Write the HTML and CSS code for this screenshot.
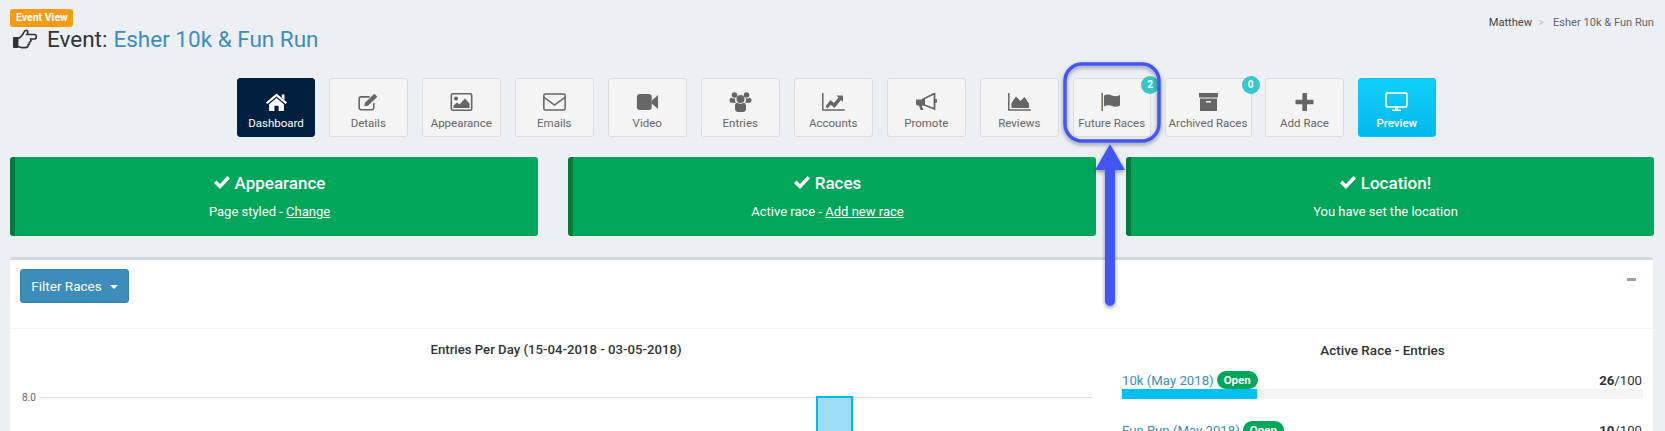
FILE: index.html
```html
<!DOCTYPE html>
<html lang="en">
<head>
<meta charset="utf-8">
<title>Event: Esher 10k &amp; Fun Run</title>
<link rel="stylesheet" href="styles.css">
</head>
<body>
<div class="page">
  <header class="head">
    <div class="head-left">
      <span class="view-badge">Event View</span>
      <h1 class="title">
        <svg class="hand" viewBox="0 0 24 20"><path d="M.5 8.500h4.500V18.500H.5z" fill="#333" stroke="#333"/><path d="M5 9.500c2.500-1 5-4 6-6.500.6-1.800 3.500-2.200 3.800-.2.200 1-.3 1.800-.8 2.700h7.300c2.800 0 2.800 4.500 0 4.500h-3.600c.5 1.400-.1 2.800-1.200 3.200.2 1.300-.4 2.400-1.400 2.700.1 1.700-1 2.800-2.600 2.800H9c-1.700 0-2.600-1-4-1.200" fill="none" stroke="#333" stroke-width="1.700"/></svg>
        <span>Event:</span> <a class="title-link">Esher 10k &amp; Fun Run</a>
      </h1>
    </div>
    <nav class="crumbs"><span class="crumb-first">Matthew</span><span class="crumb-sep">&gt;</span><span>Esher 10k &amp; Fun Run</span></nav>
  </header>

  <nav class="tools">
    <a class="tool tool-dark">
      <svg class="ico" viewBox="0 0 20 17"><path d="M10 .5 20 9l-1.400 1.500L10 3.200 1.400 10.500 0 9zM15 1.500h2.500v5L15 4.300z"/><path d="M10 4.800l7 5.800V17h-5v-5H8v5H3v-6.400z"/></svg>
      Dashboard</a>
    <a class="tool">
      <svg class="ico" viewBox="0 0 20 17"><path d="M15 9.500V14a1.800 1.800 0 0 1-1.800 1.800H3A1.800 1.800 0 0 1 1.200 14V5.500A1.800 1.800 0 0 1 3 3.700h8" fill="none" stroke="#666" stroke-width="1.500"/><path d="M6 12.500l.6-3.200L15.500.6l2.900 2.900-8.900 8.600z"/></svg>
      Details</a>
    <a class="tool">
      <svg class="ico" viewBox="0 0 22 18"><rect x=".8" y=".8" width="20.400" height="16.400" rx="1.500" fill="none" stroke="#666" stroke-width="1.600"/><circle cx="5.500" cy="5.500" r="2"/><path d="M3 15v-2.500l3.500-3 2.500 2 5.500-6 4.500 5V15z"/></svg>
      Appearance</a>
    <a class="tool">
      <svg class="ico" viewBox="0 0 22 17"><rect x=".8" y=".8" width="20.400" height="15.400" rx="1.500" fill="none" stroke="#666" stroke-width="1.500"/><path d="M1 4l10 7.500L21 4" fill="none" stroke="#666" stroke-width="1.500"/></svg>
      Emails</a>
    <a class="tool">
      <svg class="ico" viewBox="0 0 20 17"><rect y="1" width="14" height="15" rx="3"/><path d="M14 7l6-5v13l-6-5z"/></svg>
      Video</a>
    <a class="tool">
      <svg class="ico ico-tall" viewBox="0 0 22 20"><circle cx="11" cy="7" r="4"/><circle cx="5" cy="3" r="2.800"/><circle cx="17" cy="3" r="2.800"/><path d="M0 8.500c0-1.800 1-2.800 2-2.800 1 .8 2.500 1 3.800.7-.6 1.600-.2 3 .7 4.300H2c-1.200 0-2-.7-2-2.200zM22 8.500c0-1.800-1-2.800-2-2.800-1 .8-2.500 1-3.800.7.600 1.600.2 3-.7 4.300H20c1.200 0 2-.7 2-2.200z"/><path d="M5.500 13.500c0-1.800 1-2.800 2.200-2.800 2 1.400 4.600 1.400 6.600 0 1.200 0 2.200 1 2.200 2.800V17c0 1.500-1 3-3 3H8.500c-2 0-3-1.500-3-3z"/></svg>
      Entries</a>
    <a class="tool">
      <svg class="ico" viewBox="0 0 23 18"><path d="M.8 0v17h22" fill="none" stroke="#666" stroke-width="1.500"/><path d="M3.500 13.500 8.500 7l3.500 3 4.500-5.500-2-2h6.500V9l-2-2-6.500 8-3.700-3.200-3.300 3.700z"/></svg>
      Accounts</a>
    <a class="tool">
      <svg class="ico" viewBox="0 0 21 18"><path d="M0 6.500h6v7l1.500 3.500H4.500L3 12.500H1.500C.5 12.500 0 11.500 0 10.500z"/><path d="M7 6.300 18.500.5v15.500L7 11.500z" fill="none" stroke="#666" stroke-width="1.800"/><path d="M6 6h3v6.500H6z"/><rect x="18.500" y="6" width="2.500" height="4" rx="1"/></svg>
      Promote</a>
    <a class="tool">
      <svg class="ico" viewBox="0 0 23 18"><path d="M.8 0v17h22" fill="none" stroke="#666" stroke-width="1.500"/><path d="M3.500 15V10l4.500-6.500L12.500 8l4-4 4.500 6.500V15z"/></svg>
      Reviews</a>
    <a class="tool tool-future">
      <svg class="ico" viewBox="0 0 21 18"><rect x=".5" y="0" width="1.300" height="18" fill="#5a5040"/><path d="M3 2.500c3-1.500 5.500-1 8 0s5 1 8-.5v10.500c-3 1.500-5.500 1.500-8 .5s-5-1-8 .5z"/></svg>
      Future Races<span class="count">2</span></a>
    <a class="tool tool-archived">
      <svg class="ico" viewBox="0 0 19 18"><rect width="19" height="4.500"/><path d="M1 5.500h17V18H1zM7 8v1.500h5V8z" fill-rule="evenodd"/></svg>
      Archived Races<span class="count">0</span></a>
    <a class="tool tool-add">
      <svg class="ico" viewBox="0 0 17 17"><rect x="6.500" width="4.400" height="17" rx=".8"/><rect y="6.300" width="17" height="4.400" rx=".8"/></svg>
      Add Race</a>
    <a class="tool tool-preview">
      <svg class="ico ico-screen" viewBox="0 0 23 20"><rect x="1" y="1" width="21" height="14" rx="1.500" fill="none" stroke="#fff" stroke-width="1.700"/><path d="M10 15h3v2.500h3V19H7v-1.500h3z" fill="#fff"/></svg>
      Preview</a>
  </nav>

  <section class="cards">
    <div class="card">
      <h3 class="card-title"><svg class="tick" viewBox="0 0 16 13"><path d="M0 7l2.500-2.500L6 8l7.500-8L16 2.500 6 13z"/></svg>Appearance</h3>
      <p class="card-text">Page styled - <a class="card-link">Change</a></p>
    </div>
    <div class="card">
      <h3 class="card-title"><svg class="tick" viewBox="0 0 16 13"><path d="M0 7l2.500-2.500L6 8l7.500-8L16 2.500 6 13z"/></svg>Races</h3>
      <p class="card-text">Active race - <a class="card-link">Add new race</a></p>
    </div>
    <div class="card">
      <h3 class="card-title"><svg class="tick" viewBox="0 0 16 13"><path d="M0 7l2.500-2.500L6 8l7.500-8L16 2.500 6 13z"/></svg>Location!</h3>
      <p class="card-text">You have set the location</p>
    </div>
  </section>

  <section class="panel">
    <div class="panel-head">
      <button class="filter">Filter Races<span class="caret"></span></button>
      <span class="collapse"></span>
    </div>
    <div class="panel-body">
      <div class="chart">
        <h4 class="sub sub-chart">Entries Per Day (15-04-2018 - 03-05-2018)</h4>
        <div class="plot">
          <div class="gridrow"><span class="tick-label">8.0</span><span class="gridline"></span></div>
          <div class="bar"></div>
        </div>
      </div>
      <div class="races">
        <h4 class="sub">Active Race - Entries</h4>
        <div class="race">
          <div class="race-line"><a class="race-name">10k (May 2018)</a><span class="pill">Open</span><span class="race-num"><b>26</b>/100</span></div>
          <div class="track"><div class="fill" style="width:26%"></div></div>
        </div>
        <div class="race">
          <div class="race-line"><a class="race-name">Fun Run (May 2018)</a><span class="pill">Open</span><span class="race-num"><b>10</b>/100</span></div>
          <div class="track"><div class="fill" style="width:10%"></div></div>
        </div>
      </div>
    </div>
  </section>

  <svg class="callout" viewBox="0 0 1665 431" width="1665" height="431">
    <defs><filter id="sh" x="-20%" y="-20%" width="140%" height="140%"><feDropShadow dx="0" dy="2" stdDeviation="2" flood-color="#000" flood-opacity=".4"/></filter></defs>
    <g filter="url(#sh)">
      <rect x="1065" y="64" width="94" height="77" rx="17" fill="none" stroke="#4057f5" stroke-width="3.500"/>
      <path d="M1110 144l15 26h-10v131a5 5 0 0 1-10 0V170h-10z" fill="#4057f5"/>
    </g>
  </svg>
</div>
</body>
</html>
```
FILE: styles.css
```css
* { box-sizing: border-box; }
html, body { margin: 0; height: 431px; overflow: hidden; }
body { background: #ecf0f5; font-family: Roboto, "Noto Sans", sans-serif; color: #333; }
.page { position: relative; width: 1665px; height: 431px; padding: 9px 11px 0 10px; overflow: hidden; }

.head { display: flex; justify-content: space-between; align-items: flex-start; height: 69px; }
.head-left { display: flex; flex-direction: column; align-items: flex-start; }
.view-badge { background: #f39c12; color: #fff; font-size: 10.500px; font-weight: 700; line-height: 18px; height: 18px; padding: 0 6px; border-radius: 3px; width: 63px; white-space: nowrap; }
.title { margin: 0 0 0 3px; font-size: 22.500px; font-weight: 400; line-height: 24px; display: flex; align-items: center; gap: 6px; white-space: nowrap; color: #333; }
.hand { width: 24px; height: 20px; margin-right: 4px; }
.title-link { color: #3c8dbc; }
.crumbs { font-size: 11.100px; margin-top: 7px; color: #666; line-height: 14px; }
.crumb-first { color: #444; }
.crumb-sep { color: #bbb; margin: 0 9px 0 6px; }

.tools { display: flex; gap: 13.500px; padding-left: 227px; height: 59px; align-items: stretch; }
.tool { position: relative; display: flex; flex-direction: column; align-items: center; justify-content: flex-end; width: 79.500px; padding-bottom: 5px; background: #f4f4f4; border: 1px solid #ddd; border-radius: 3px; color: #666; font-size: 11.500px; line-height: 16px; white-space: nowrap; }
.ico { height: 18px; width: 23px; fill: #666; margin-bottom: 4px; }
.ico-tall { height: 20px; margin-bottom: 3px; }
.tool-dark { width: 78px; background: #001f3f; border-color: #001f3f; color: #fff; }
.tool-dark .ico { fill: #fff; }
.tool-future { width: 78.500px; }
.tool-archived { width: 87px; }
.tool-add { width: 79px; }
.tool-preview { width: 78.500px; background: linear-gradient(#12d0fc, #00b8ec); border-color: #08c2f2; color: #fff; font-weight: 500; }
.ico-screen { height: 20px; margin-bottom: 3px; }
.count { position: absolute; top: -3px; right: -9px; width: 18px; height: 18px; border-radius: 50%; background: #35c8c8; color: #fff; font-size: 10px; font-weight: 700; line-height: 18px; text-align: center; }

.cards { display: flex; gap: 30px; margin-top: 20px; }
.card { flex: 1; height: 79px; background: #00a65a; border-left: 5px solid #007a3d; border-radius: 3px; color: #fff; text-align: center; padding: 15px 14px 0 0; }
.card-title { margin: 0; font-size: 17px; font-weight: 500; line-height: 22px; }
.tick { width: 16px; height: 13px; fill: #fff; margin-right: 5px; }
.card-text { margin: 9px 0 0; font-size: 13px; line-height: 18px; }
.card-link { text-decoration: underline; color: #fff; }

.panel { margin-top: 21px; background: #fff; border-top: 3px solid #d2d6de; border-radius: 3px 3px 0 0; height: 200px; margin-right: 1px; }
.panel-head { display: flex; justify-content: space-between; height: 69px; padding: 9px 17px 0 10px; border-bottom: 1px solid #f4f4f4; }
.filter { height: 34px; width: 109px; background: #3c8dbc; border: 1px solid #367fa9; border-radius: 3px; color: #fff; font: 13.500px Roboto, sans-serif; padding: 0; }
.caret { display: inline-block; border: 4px solid transparent; border-top-color: #fff; border-bottom: 0; margin-left: 8px; vertical-align: middle; }
.collapse { width: 9px; height: 3px; background: #97a0b3; margin-top: 9px; }
.panel-body { display: grid; grid-template-columns: 1072px 521px; column-gap: 30px; padding: 12px 10px 0; }
.sub { margin: 0; font-size: 13.500px; font-weight: 500; line-height: 18px; text-align: center; color: #333; }
.sub-chart { font-size: 13.200px; }
.plot { position: relative; margin-top: 33px; height: 60px; }
.gridrow { display: flex; align-items: center; gap: 3px; height: 10px; }
.tick-label { font-size: 10px; color: #666; width: 16px; padding-left: 2px; }
.gridline { flex: 1; height: 1px; background: #ddd; }
.bar { position: absolute; left: 796px; top: 4px; width: 37px; height: 60px; background: #9bdcf9; border: 2px solid #00b4ee; }
.race { margin-top: 12px; }
.race + .race { margin-top: 22px; }
.race-line { display: flex; align-items: center; height: 18px; font-size: 13.200px; }
.race-name { color: #3c8dbc; }
.pill { margin-left: 3px; height: 18px; padding: 0 7px; border-radius: 9px; background: #00a65a; color: #fff; font-size: 11.500px; font-weight: 700; line-height: 18px; }
.race-num { margin-left: auto; padding-right: 1px; }
.track { height: 10px; background: #f5f5f5; }
.fill { height: 10px; background: #00c0ef; }

.callout { position: absolute; left: 0; top: 0; pointer-events: none; }
```
